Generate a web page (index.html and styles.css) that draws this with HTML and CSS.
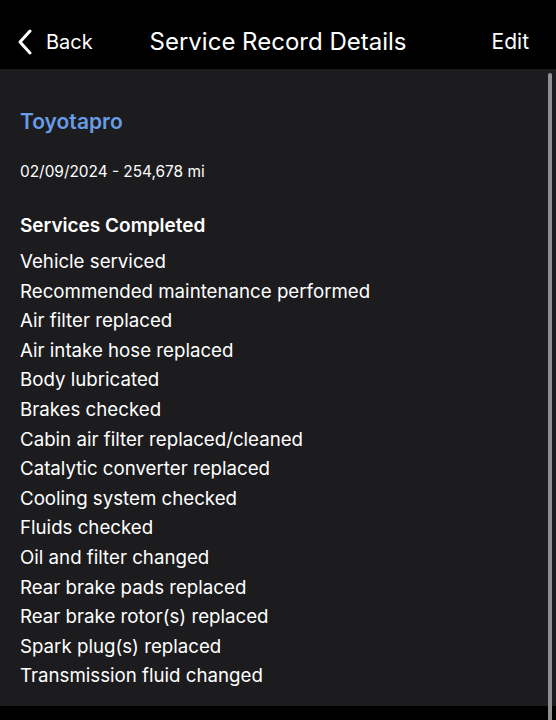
FILE: index.html
```html
<!DOCTYPE html>
<html lang="en">
<head>
    <meta charset="UTF-8">
    <meta name="viewport" content="width=device-width, initial-scale=1.0">
    <title>Service Record Details</title>
    <link rel="stylesheet" href="styles.css">
</head>
<body>
    <header class="nav">
        <div class="nav-back">
            <svg width="16" height="26" viewBox="0 0 16 26"><path d="M13 2 L3 13 L13 24" fill="none" stroke="#fff" stroke-width="3" stroke-linecap="round" stroke-linejoin="round"/></svg>
            <span>Back</span>
        </div>
        <div class="nav-title">Service Record Details</div>
        <div class="nav-edit">Edit</div>
    </header>

    <main class="content">
        <div class="scrollbar"></div>
        <h1 class="shop">Toyotapro</h1>
        <p class="meta">02/09/2024 - 254,678 mi</p>
        <h2 class="section">Services Completed</h2>
        <ul class="services">
            <li>Vehicle serviced</li>
            <li>Recommended maintenance performed</li>
            <li>Air filter replaced</li>
            <li>Air intake hose replaced</li>
            <li>Body lubricated</li>
            <li>Brakes checked</li>
            <li>Cabin air filter replaced/cleaned</li>
            <li>Catalytic converter replaced</li>
            <li>Cooling system checked</li>
            <li>Fluids checked</li>
            <li>Oil and filter changed</li>
            <li>Rear brake pads replaced</li>
            <li>Rear brake rotor(s) replaced</li>
            <li>Spark plug(s) replaced</li>
            <li>Transmission fluid changed</li>
        </ul>
    </main>
    <div class="bottom"></div>
</body>
</html>
```

FILE: styles.css
```css
body {
    margin: 0;
    background: #000;
    color: #fff;
    font-family: Inter, "Noto Sans", sans-serif;
    width: 556px;
    height: 720px;
    overflow: hidden;
}

.nav {
    height: 69px;
    display: flex;
    align-items: center;
    justify-content: space-between;
    padding: 14px 27px 0 17px;
    position: relative;
    box-sizing: border-box;
}

.nav-back {
    display: flex;
    align-items: center;
    gap: 13px;
    font-size: 20px;
}

.nav-title {
    position: absolute;
    left: 0;
    right: 0;
    top: 14px;
    bottom: 0;
    display: flex;
    align-items: center;
    justify-content: center;
    font-size: 24px;
    pointer-events: none;
}

.nav-edit {
    font-size: 21px;
}

.content {
    background: #1c1c1e;
    height: 637px;
    padding: 40px 20px 0;
    box-sizing: border-box;
    position: relative;
}

.scrollbar {
    position: absolute;
    right: 4px;
    top: 4px;
    width: 4px;
    height: 660px;
    background: #8e8e93;
    border-radius: 2px;
}

.shop {
    margin: 0;
    font-size: 21px;
    font-weight: 600;
    color: #6a9be6;
    line-height: 26px;
}

.meta {
    margin: 27px 0 0;
    font-size: 15.4px;
    line-height: 20px;
}

.section {
    margin: 32px 0 0;
    font-size: 19px;
    font-weight: 600;
    line-height: 24px;
}

.services {
    list-style: none;
    margin: 9px 0 0;
    padding: 0;
    font-size: 18.7px;
}

.services li {
    line-height: 29.6px;
}

.bottom {
    height: 14px;
}
```
